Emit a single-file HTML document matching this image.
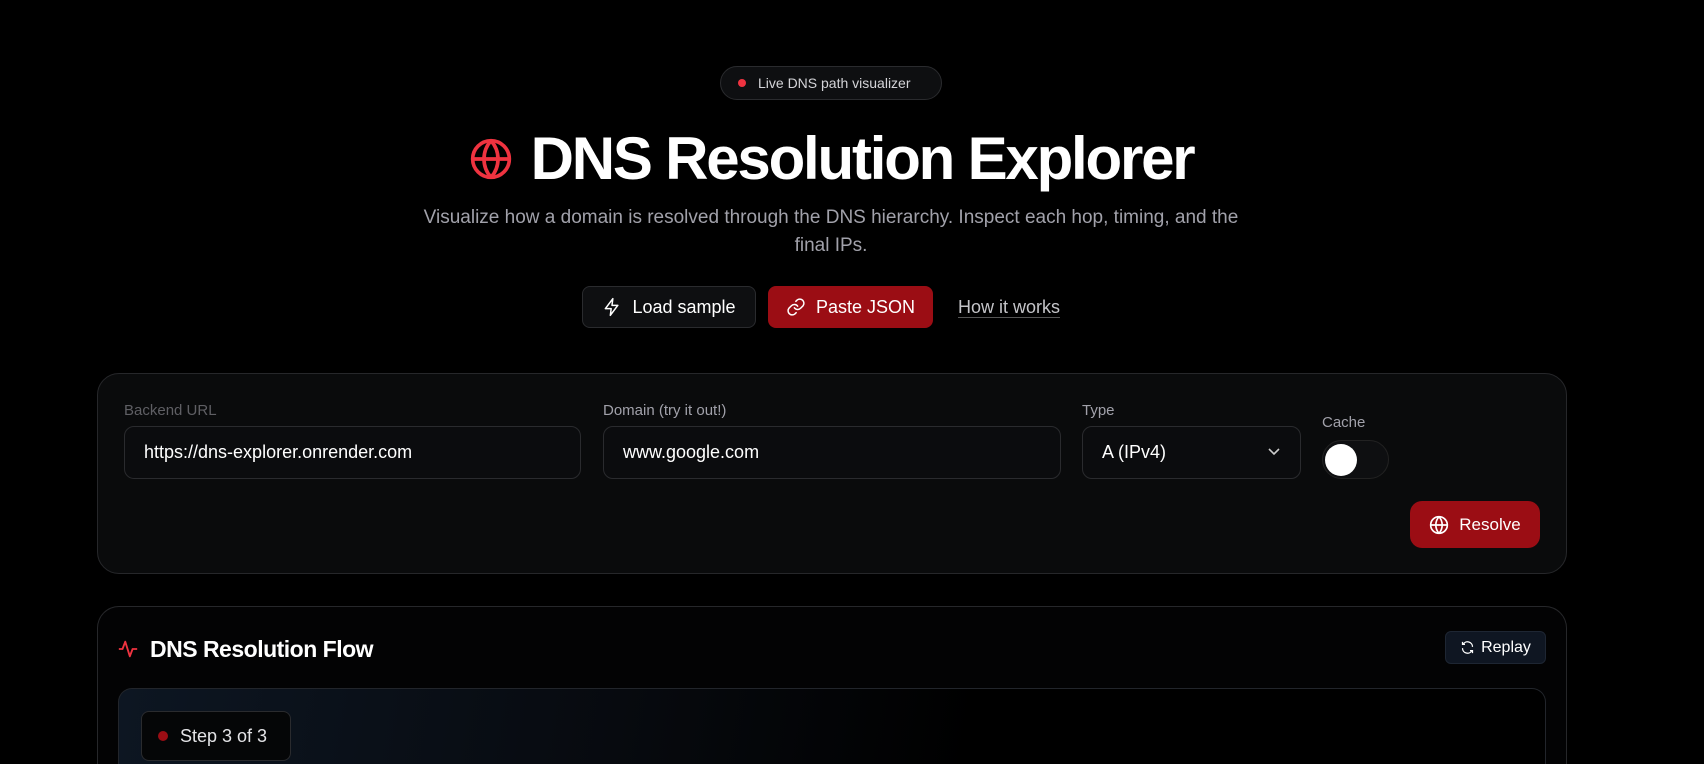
<!DOCTYPE html>
<html><head><meta charset="utf-8"><style>
*{box-sizing:border-box;margin:0;padding:0}
html,body{width:1704px;height:764px;overflow:hidden}
body{background:#000;font-family:"Liberation Sans",sans-serif;color:#fff;position:relative}
.abs{position:absolute}
.pill{left:720px;top:66px;width:222px;height:34px;border:1px solid #2a2b2e;border-radius:17px;background:#0e0f11;font-size:14px;color:#d4d4d8;display:flex;align-items:center;padding-left:17px}
.pill i{width:8px;height:8px;border-radius:50%;background:#ef3340;margin-right:12px}
h1{left:0;width:1662px;top:124px;text-align:center;font-size:60px;font-weight:bold;letter-spacing:-2.2px;display:flex;justify-content:center;align-items:center;gap:18px}
.sub{width:840px;left:411px;top:204px;text-align:center;font-size:19px;line-height:28px;color:#a1a1aa}
.btn{height:42px;border-radius:8px;display:flex;align-items:center;justify-content:center;font-size:18px;gap:10px}
.card{left:97px;width:1470px;border:1px solid #26272a;border-radius:22px;background:#0a0b0c}
.lbl{font-size:15px;color:#8b8b90}
.inp{height:53px;border:1px solid #2a2b2e;border-radius:10px;background:#0b0c0e;font-size:18px;display:flex;align-items:center;padding-left:19px}
</style></head><body>
<div class="abs pill"><i></i>Live DNS path visualizer</div>
<h1 class="abs"><svg width="44" height="44" viewBox="0 0 24 24" fill="none" stroke="#ef3340" stroke-width="2"><circle cx="12" cy="12" r="10"/><path d="M2 12h20M12 2a15 15 0 0 1 0 20M12 2a15 15 0 0 0 0 20"/></svg><span>DNS Resolution Explorer</span></h1>
<div class="abs sub">Visualize how a domain is resolved through the DNS hierarchy. Inspect each hop, timing, and the final IPs.</div>
<div class="abs btn" style="left:582px;top:286px;width:174px;border:1px solid #2a2b2e;background:#0e0f11"><svg width="20" height="20" viewBox="0 0 24 24" fill="none" stroke="#fff" stroke-width="1.8" stroke-linejoin="round"><path d="M13 2L4 14h7l-1 8 9-12h-7z"/></svg>Load sample</div>
<div class="abs btn" style="left:768px;top:286px;width:165px;background:#9b0d14"><svg width="20" height="20" viewBox="0 0 24 24" fill="none" stroke="#fff" stroke-width="1.8" stroke-linecap="round"><path d="M10 13a5 5 0 0 0 7.5.5l3-3a5 5 0 0 0-7-7l-1.7 1.7M14 11a5 5 0 0 0-7.5-.5l-3 3a5 5 0 0 0 7 7l1.7-1.7"/></svg>Paste JSON</div>
<div class="abs" style="left:958px;top:297px;font-size:18px;color:#c4c4c8;border-bottom:1px solid #555;line-height:20px">How it works</div>

<div class="abs card" style="top:373px;height:201px"></div>
<div class="abs lbl" style="left:124px;top:402px;color:#5f5f64">Backend URL</div>
<div class="abs lbl" style="left:603px;top:402px;color:#a1a1aa">Domain (try it out!)</div>
<div class="abs lbl" style="left:1082px;top:402px;color:#a1a1aa">Type</div>
<div class="abs lbl" style="left:1322px;top:414px;color:#a1a1aa">Cache</div>
<div class="abs inp" style="left:124px;top:426px;width:457px">https://dns-explorer.onrender.com</div>
<div class="abs inp" style="left:603px;top:426px;width:458px">www.google.com</div>
<div class="abs inp" style="left:1082px;top:426px;width:219px">A (IPv4)<svg class="abs" style="left:184px;top:20px" width="14" height="10" viewBox="0 0 14 10" fill="none" stroke="#ccc" stroke-width="1.6"><path d="M2 2l5 5 5-5"/></svg></div>
<div class="abs" style="left:1322px;top:440px;width:67px;height:39px;border-radius:20px;background:#0e0f11;border:1px solid #222"><div class="abs" style="left:2px;top:3px;width:32px;height:32px;border-radius:50%;background:#fff"></div></div>
<div class="abs btn" style="left:1410px;top:501px;width:130px;height:47px;border-radius:12px;background:#9b0d14;font-size:17px"><svg width="20" height="20" viewBox="0 0 24 24" fill="none" stroke="#fff" stroke-width="2"><circle cx="12" cy="12" r="10"/><path d="M2 12h20M12 2a15 15 0 0 1 0 20M12 2a15 15 0 0 0 0 20"/></svg>Resolve</div>

<div class="abs card" style="top:606px;height:158px;background:#030304;border-bottom:none;border-radius:22px 22px 0 0"></div>
<svg class="abs" style="left:117px;top:638px" width="22" height="22" viewBox="0 0 24 24" fill="none" stroke="#ef3340" stroke-width="2" stroke-linejoin="round"><path d="M2 12h4l3-8 5 16 3-8h5"/></svg>
<div class="abs" style="left:150px;top:636px;font-size:23px;font-weight:bold;letter-spacing:-0.5px">DNS Resolution Flow</div>
<div class="abs btn" style="left:1445px;top:631px;width:101px;height:33px;border-radius:6px;background:#0f1622;border:1px solid #1e2633;font-size:16px;gap:6px"><svg width="15" height="15" viewBox="0 0 24 24" fill="none" stroke="#fff" stroke-width="2"><path d="M20 11A8 8 0 0 0 5 7M4 3v4h4M4 13a8 8 0 0 0 15 4M20 21v-4h-4"/></svg>Replay</div>
<div class="abs" style="left:118px;top:688px;width:1428px;height:76px;border:1px solid #22252b;border-bottom:none;border-radius:14px 14px 0 0;background:linear-gradient(100deg,#0d1622 0%,#070a0f 35%,#000 60%)"></div>
<div class="abs" style="left:141px;top:711px;width:150px;height:50px;border:1px solid #2a2b2e;border-radius:8px;background:#050607;display:flex;align-items:center;padding-left:16px;font-size:18px;color:#e4e4e7"><i style="width:10px;height:10px;border-radius:50%;background:#9b0d14;margin-right:12px"></i>Step 3 of 3</div>
</body></html>
